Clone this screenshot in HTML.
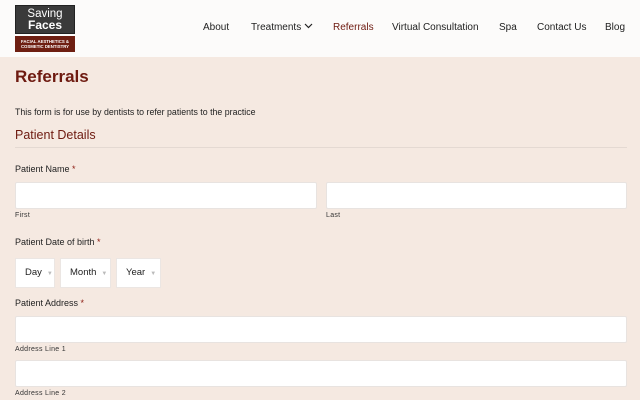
<!DOCTYPE html>
<html><head><meta charset="utf-8"><style>
*{margin:0;padding:0;box-sizing:border-box}
body{width:640px;height:400px;overflow:hidden;background:#f5e9e1;font-family:"Liberation Sans",sans-serif;color:#222;position:relative}
.hdr{position:absolute;left:0;top:0;width:640px;height:57px;background:#fcfbfa}
.logo{position:absolute;left:15px;top:5px;width:60px;height:47px}
.logo .a{position:absolute;left:0;top:0;width:60px;height:29px;background:#3a3a3a;border:1px solid #222;color:#fff;text-align:center;line-height:11px;font-size:11.5px;padding-top:3px}
.logo .a b{font-weight:900;font-size:12px}
.logo .b{position:absolute;left:0;top:31px;width:60px;height:16px;background:#6e1f12;color:#fff;font-size:4.3px;font-weight:bold;text-align:center;line-height:5px;padding-top:3px}
.nav a{position:absolute;top:22px;font-size:10px;color:#222;text-decoration:none;white-space:nowrap}
h1{position:absolute;left:15px;top:67px;font-size:17px;color:#6e1a10;font-weight:bold}
.t{position:absolute;font-size:9px;white-space:nowrap}
.sm{position:absolute;font-size:7px;color:#333;letter-spacing:.3px}
.h2{position:absolute;left:15px;top:128px;font-size:12.5px;color:#6e1a10}
.line{position:absolute;left:15px;top:147px;width:612px;height:1px;background:#e4d9d2}
.in{position:absolute;background:#fff;border:1px solid #e8e3e0;border-radius:2px}
.sel{position:absolute;top:258px;height:30px;background:#fff;border:1px solid #ebe6e3;font-size:9.5px;line-height:28px;padding-left:9px}
.sel i{font-style:normal;color:#bbb;font-size:6px;margin-left:5px}
.r{color:#8b1a10}
</style></head><body>
<div class="hdr">
<div class="logo"><div class="a">Saving<br><b>Faces</b></div><div class="b">FACIAL AESTHETICS &amp;<br>COSMETIC DENTISTRY</div></div>
<div class="nav">
<a style="left:203px">About</a>
<a style="left:251px">Treatments <svg width="9" height="6" viewBox="0 0 9 6" style="vertical-align:1px"><path d="M1 1l3.5 3.5L8 1" stroke="#222" fill="none" stroke-width="1.2"/></svg></a>
<a style="left:333px;color:#6e1a10">Referrals</a>
<a style="left:392px">Virtual Consultation</a>
<a style="left:499px">Spa</a>
<a style="left:537px">Contact Us</a>
<a style="left:605px">Blog</a>
</div></div>
<h1>Referrals</h1>
<div class="t" style="left:15px;top:107px;font-size:8.8px">This form is for use by dentists to refer patients to the practice</div>
<div class="h2">Patient Details</div>
<div class="line"></div>
<div class="t" style="left:15px;top:164px">Patient Name <span class="r">*</span></div>
<div class="in" style="left:15px;top:182px;width:302px;height:27px"></div>
<div class="in" style="left:326px;top:182px;width:301px;height:27px"></div>
<div class="sm" style="left:15px;top:212px">First</div>
<div class="sm" style="left:326px;top:212px">Last</div>
<div class="t" style="left:15px;top:237px">Patient Date of birth <span class="r">*</span></div>
<div class="sel" style="left:15px;width:40px">Day<i>▼</i></div>
<div class="sel" style="left:60px;width:51px">Month<i>▼</i></div>
<div class="sel" style="left:116px;width:45px">Year<i>▼</i></div>
<div class="t" style="left:15px;top:298px">Patient Address <span class="r">*</span></div>
<div class="in" style="left:15px;top:316px;width:612px;height:27px"></div>
<div class="sm" style="left:15px;top:346px">Address Line 1</div>
<div class="in" style="left:15px;top:360px;width:612px;height:27px"></div>
<div class="sm" style="left:15px;top:390px">Address Line 2</div>
</body></html>
